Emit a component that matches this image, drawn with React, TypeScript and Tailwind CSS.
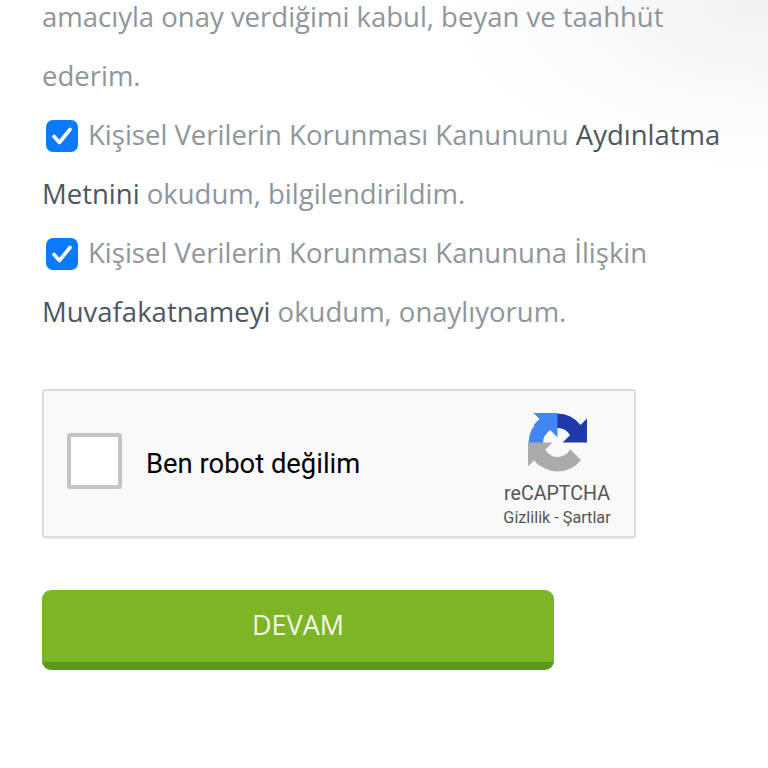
const ARROW =
  "M0 32V58L7 51A32 32 0 0 0 57.5 51L45.7 39.4A15.6 15.6 0 0 1 18.5 40L26.5 32Z";

const CheckedBox = () => (
  <svg viewBox="0 0 32 32" className="inline-block w-8 h-8 ml-1 mr-[10px] align-[-7px]">
    <rect width="32" height="32" rx="7" fill="#0a7aff" />
    <path d="M8 16.5l5.5 6L24 9.5" fill="none" stroke="#fff" strokeWidth="3.6" strokeLinecap="round" strokeLinejoin="round" />
  </svg>
);

const RecaptchaLogo = () => (
  <svg viewBox="0 0 64 64" className="w-[59px] h-[59px]">
    <path d={ARROW} fill="#1c3aa9" transform="rotate(180 32 32)" />
    <path d={ARROW} fill="#4285f4" transform="rotate(90 32 32)" />
    <path d={ARROW} fill="#ababab" />
  </svg>
);

const Recaptcha = () => (
  <div className="flex items-center w-[594px] h-[149px] mt-[48px] pl-[23px] pr-[22px] rounded-[3px] border-2 border-[#dcdcdc] bg-[#f9f9f9] shadow-[0_1px_2px_rgba(0,0,0,0.08)]">
    <div className="w-[55px] h-[56px] -mt-[6px] rounded-[3px] border-4 border-[#c4c4c4] bg-white" />
    <span className="ml-6 mt-[2px] text-[27.4px] text-black font-['Roboto',sans-serif]">Ben robot değilim</span>
    <div className="ml-auto flex flex-col items-center w-[110px] pt-[10px] font-['Roboto',sans-serif] text-[#555]">
      <RecaptchaLogo />
      <span className="mt-[10px] text-[19.6px] leading-[24px]">reCAPTCHA</span>
      <span className="mt-[2px] mb-[-4px] text-[16.2px] leading-[20px] whitespace-nowrap">Gizlilik - Şartlar</span>
    </div>
  </div>
);

export default function App() {
  return (
    <div className="h-[768px] overflow-hidden px-[42px] bg-[radial-gradient(ellipse_320px_170px_at_100%_0%,#f2f2f2,#ffffff)] font-['Open_Sans',sans-serif]">
      <div className="-mt-[13px] text-[27.5px] leading-[59px] text-[#8f959b]">
        <p>amacıyla onay verdiğimi kabul, beyan ve taahhüt ederim.</p>
        <p>
          <CheckedBox />
          Kişisel Verilerin Korunması Kanununu <span className="text-[#4d5661]">Aydınlatma Metnini</span> okudum, bilgilendirildim.
        </p>
        <p>
          <CheckedBox />
          Kişisel Verilerin Korunması Kanununa İlişkin <span className="text-[#4d5661]">Muvafakatnameyi</span> okudum, onaylıyorum.
        </p>
      </div>
      <Recaptcha />
      <button className="block w-[512px] h-20 mt-[52px] pb-[2px] rounded-[9px] bg-[#7cb526] border-b-8 border-[#5c981c] text-[27px] text-[#f4fae8]">
        DEVAM
      </button>
    </div>
  );
}
